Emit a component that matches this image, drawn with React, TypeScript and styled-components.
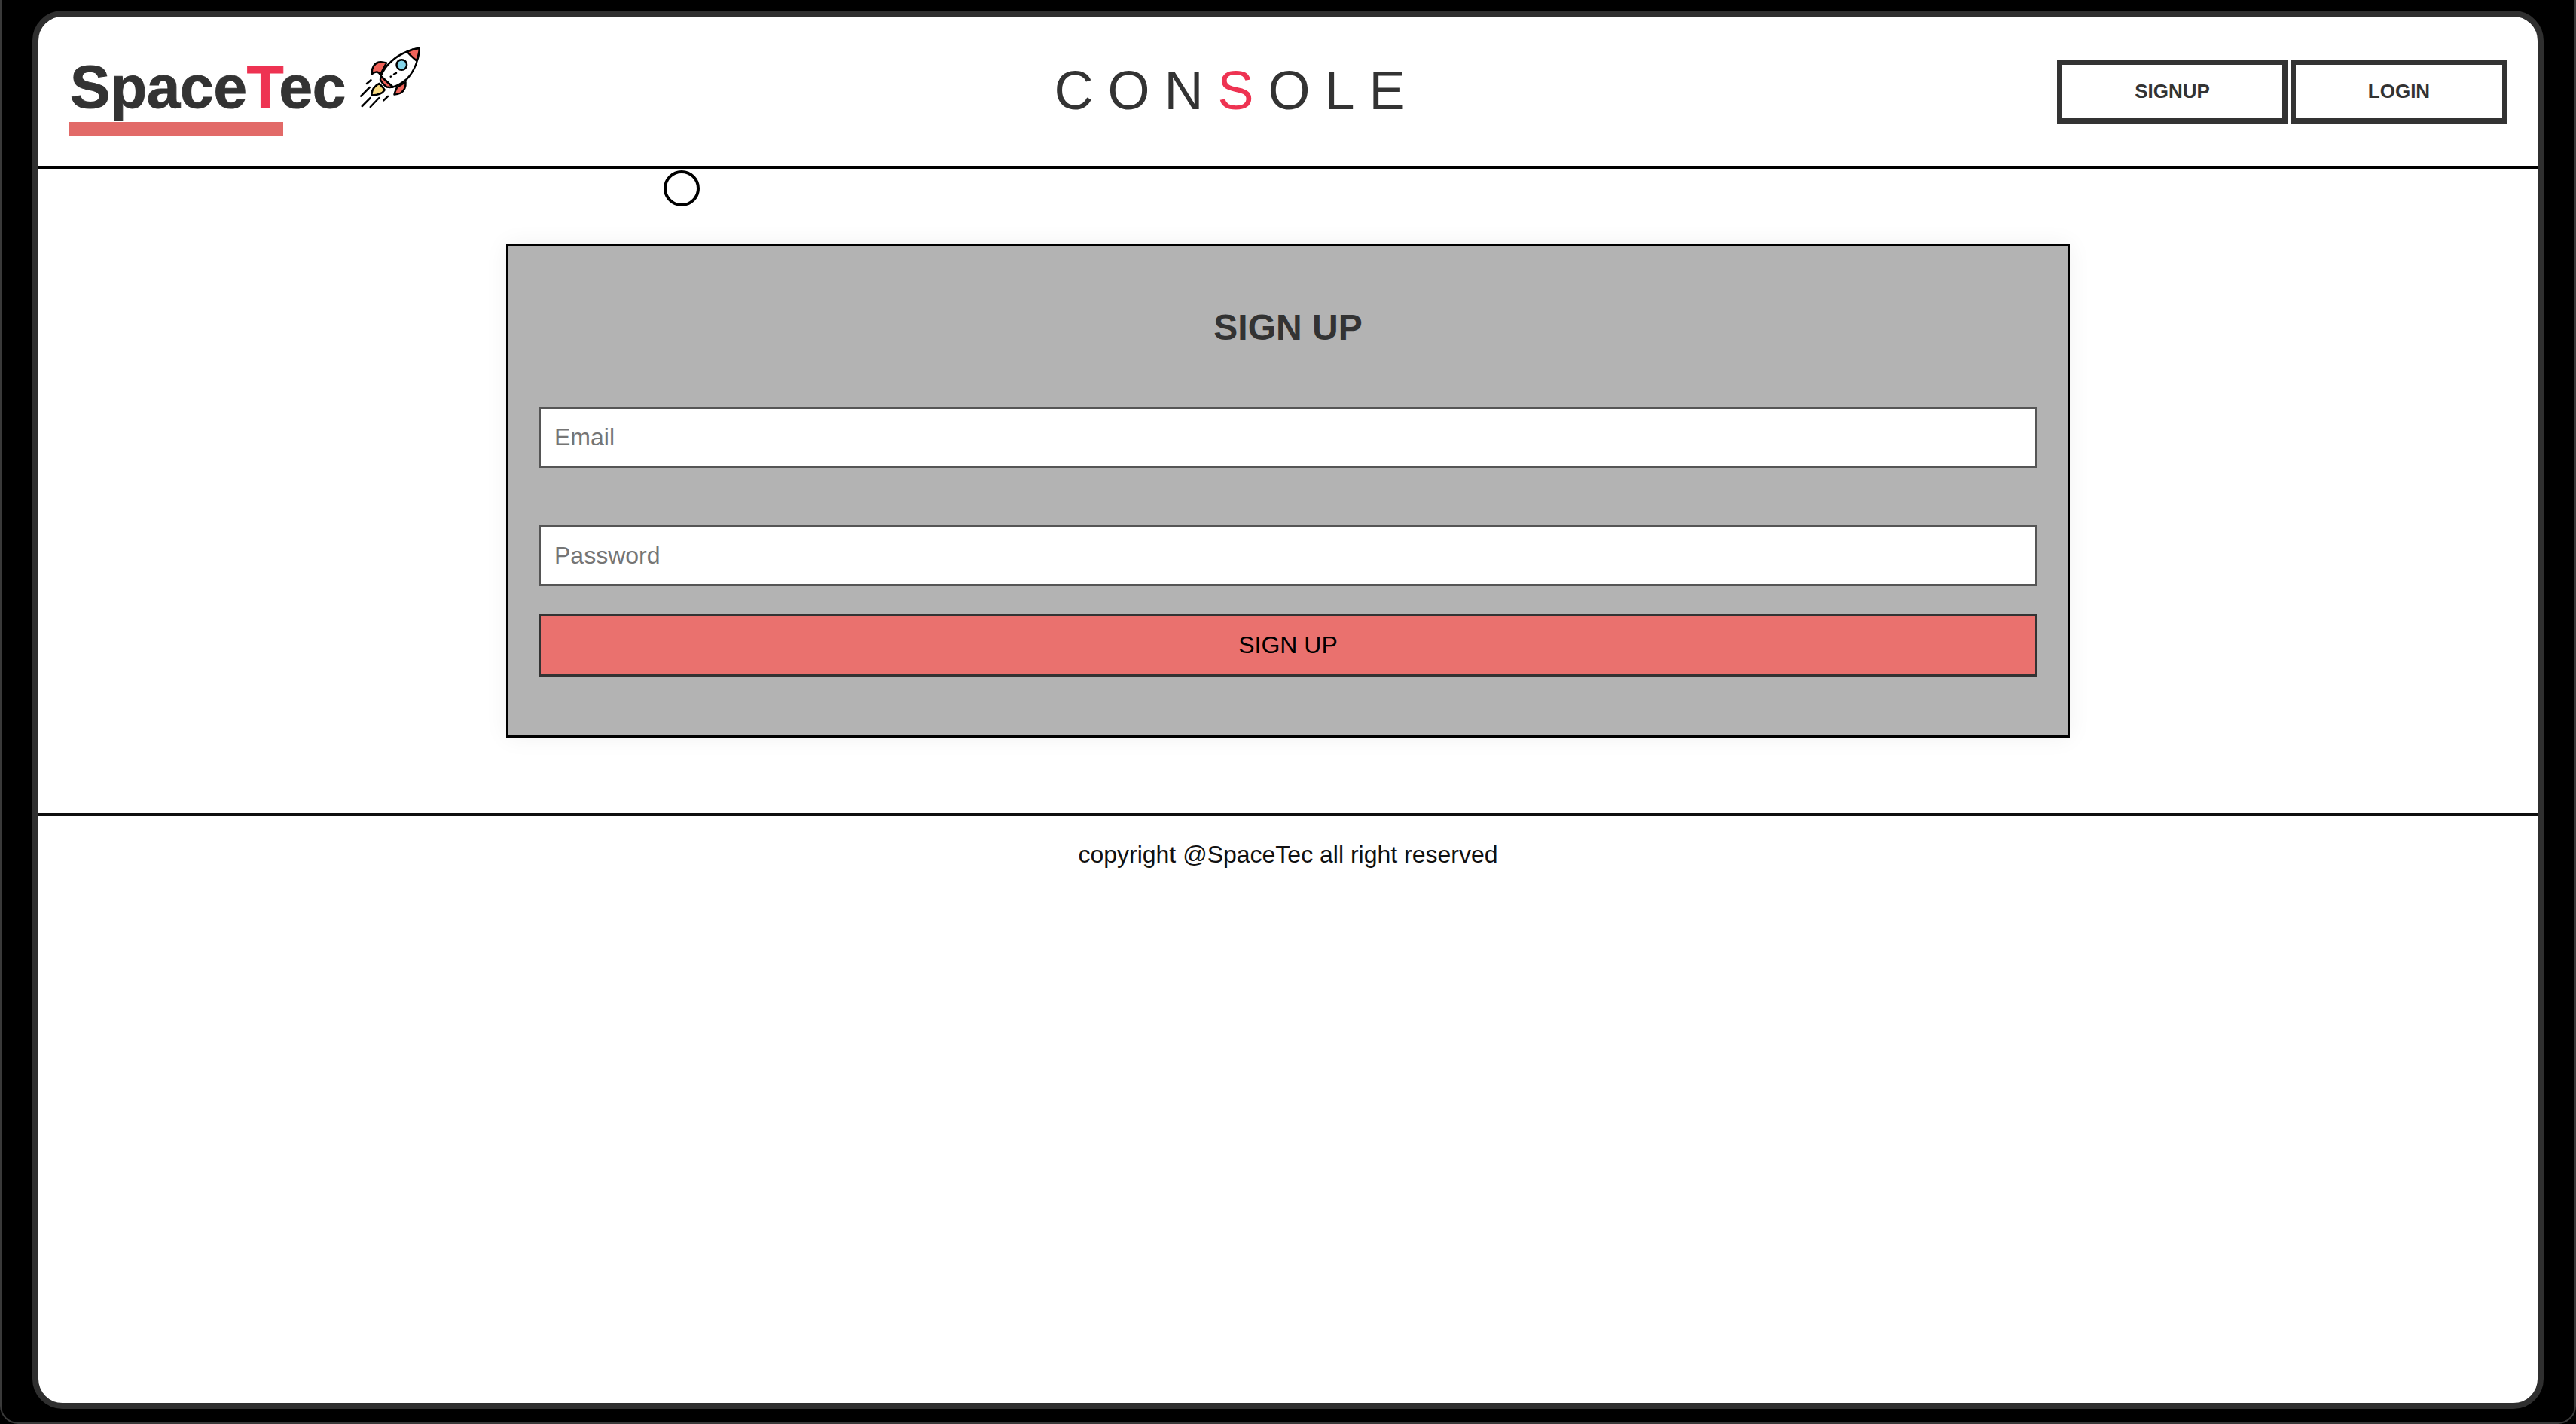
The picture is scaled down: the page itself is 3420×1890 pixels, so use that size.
import React from 'react'
import styled, { createGlobalStyle } from 'styled-components'

const GlobalStyle = createGlobalStyle`
  html, body {
    margin: 0;
    padding: 0;
    background: #000;
  }
  * {
    box-sizing: border-box;
  }
`

const Device = styled.div`
  width: 3420px;
  height: 1890px;
  padding: 14px 41px 18px 41px;
  background: #000;
  border: solid #3a3a3a;
  border-width: 0 2px 2px 2px;
  border-radius: 0 0 24px 24px;
  font-family: 'Liberation Sans', Arial, sans-serif;
  overflow: hidden;
`

const Screen = styled.div`
  height: 100%;
  background: #fff;
  border: 8px solid #2f2f2f;
  border-radius: 40px;
  overflow: hidden;
`

const Header = styled.header`
  height: 202px;
  padding: 0 40px;
  display: flex;
  align-items: center;
  justify-content: space-between;
  border-bottom: 4px solid #000;
`

const Logo = styled.div`
  width: 469px;
  display: flex;
  flex-direction: column;
  margin-top: 2px;
`

const LogoRow = styled.div`
  display: flex;
  align-items: flex-start;
`

const LogoText = styled.div`
  width: 385px;
  margin: 7px 0 0 2px;
  font-size: 80px;
  line-height: 92px;
  font-weight: 700;
  letter-spacing: -0.2px;
  color: #333;
  -webkit-text-stroke: 1px currentColor;
`

const Accent = styled.span`
  color: #ee3352;
`

const LogoBar = styled.div`
  width: 285px;
  height: 19px;
  background: #e26a68;
`

const Title = styled.h1`
  margin: -3px 0 0 -7px;
  font-size: 72px;
  line-height: 82px;
  font-weight: 400;
  letter-spacing: 19px;
  color: #333;
`

const Nav = styled.nav`
  display: flex;
  gap: 4px;
`

const NavButton = styled.button<{ $width: number }>`
  width: ${({ $width }) => $width}px;
  height: 85px;
  padding: 0;
  background: #fff;
  border: 7px solid #333;
  border-radius: 0;
  font-family: inherit;
  font-size: 26px;
  font-weight: 700;
  color: #333;
`

const Main = styled.main`
  height: 855px;
  padding-top: 2px;
`

const Spinner = styled.div`
  width: 48px;
  height: 48px;
  margin-left: 830px;
  border: 4px solid #000;
  border-radius: 50%;
`

const Card = styled.form`
  width: 2076px;
  height: 655px;
  margin: 50px auto 0;
  padding: 0 40px;
  display: flex;
  flex-direction: column;
  background: #b3b3b3;
  border: 3px solid #000;
  box-shadow: 0 0 30px rgba(0, 0, 0, 0.06);
`

const CardTitle = styled.h2`
  margin: 81px 0 78px;
  font-size: 48px;
  line-height: 54px;
  font-weight: 700;
  text-align: center;
  color: #333;
`

const Field = styled.input<{ $gap: number }>`
  display: block;
  width: 100%;
  height: 81px;
  margin-bottom: ${({ $gap }) => $gap}px;
  padding: 0 18px;
  background: #fff;
  border: 3px solid #555;
  border-radius: 0;
  outline: none;
  font-family: inherit;
  font-size: 32px;

  &::placeholder {
    color: #757575;
    opacity: 1;
  }
`

const Submit = styled.button`
  display: block;
  width: 100%;
  height: 83px;
  padding: 0;
  background: #ea716e;
  border: 3px solid #333;
  border-radius: 0;
  font-family: inherit;
  font-size: 32px;
  color: #000;
`

const Footer = styled.footer`
  padding-top: 32px;
  border-top: 4px solid #0e0e0e;
  font-size: 32px;
  line-height: 38px;
  text-align: center;
  color: #111;
`

function Rocket() {
  return (
    <svg width="80" height="80" viewBox="0 0 80 80" fill="none" stroke="#000" strokeWidth="2.5" strokeLinecap="round" strokeLinejoin="round">
      <path d="M16 35C15 27 19 21 25 19.5C29 19 32 19.5 35 20.5L27 36C24 31 20 32 16 35Z" fill="#f0635a" />
      <path d="M60.5 46C61 52 59 57 54 60.5C51 62 48 62.5 45.5 62.5C46 59 48 56 49 53Z" fill="#f0635a" />
      <path d="M79 1C72 1.5 67 3.5 62.5 5.5C56 8 48.5 12 42 18C35 24 31 30 27.5 38L43.5 52.5C50 51 56 47 62 42C72 32 78 16 79 1Z" fill="#fff" />
      <path d="M62.5 5.5C68 3 73 1.5 79 1C78.5 7 77 12 75 17.5C71 14 66 10 62.5 5.5Z" fill="#f0635a" />
      <path d="M27.5 38L43.5 52.5C41 53 38 53 35.5 52.5C32 50 29 47 27 43Z" fill="#f0635a" />
      <circle cx="55.3" cy="23" r="6.8" fill="#85d6ea" />
      <path d="M45 35.5L48 33.8" />
      <path d="M40.7 38.7L40.9 38.6" />
      <path d="M15.5 63.5C15.5 59 17 55 19 53C21 50.5 23 49 25.5 48C28 50.5 31 53.5 32.7 56.3C31 59 29 60.5 26.5 61.5C23 63 19 63.5 15.5 63.5Z" fill="#f7d97f" />
      <path d="M9 48L14.5 43.2M1.2 64.7L12.7 53M2.8 78L13.7 67M13.8 79L25.2 67M31.3 70.3L37 64.8" />
    </svg>
  )
}

export default function App() {
  return (
    <>
      <GlobalStyle />
      <Device>
        <Screen>
          <Header>
            <Logo>
              <LogoRow>
                <LogoText>
                  Space<Accent>T</Accent>ec
                </LogoText>
                <Rocket />
              </LogoRow>
              <LogoBar />
            </Logo>
            <Title>
              CON<Accent>S</Accent>OLE
            </Title>
            <Nav>
              <NavButton $width={306}>SIGNUP</NavButton>
              <NavButton $width={288}>LOGIN</NavButton>
            </Nav>
          </Header>
          <Main>
            <Spinner />
            <Card>
              <CardTitle>SIGN UP</CardTitle>
              <Field type="text" placeholder="Email" $gap={76} />
              <Field type="password" placeholder="Password" $gap={37} />
              <Submit type="button">SIGN UP</Submit>
            </Card>
          </Main>
          <Footer>copyright @SpaceTec all right reserved</Footer>
        </Screen>
      </Device>
    </>
  )
}
